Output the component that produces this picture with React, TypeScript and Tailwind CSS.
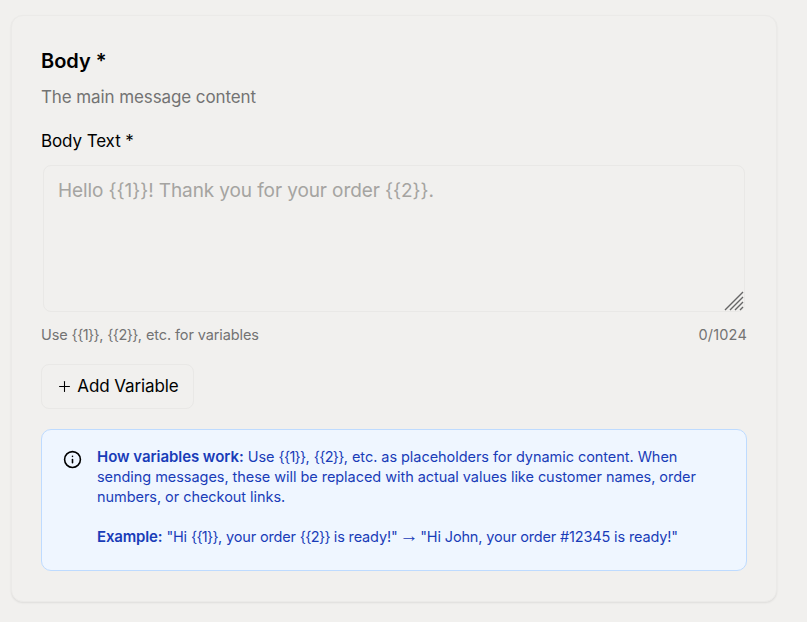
import { Info, Plus } from "lucide-react";

const Var = ({ n, space }: { n: number; space: string }) => (
  <span className={space}>{`{{${n}}}`}</span>
);

export default function App() {
  return (
    <div className="min-h-[622px] bg-[#f1f0ee] px-[11px] pt-[15px] font-['Inter',sans-serif] text-black">
      <div className="w-[766px] h-[587px] rounded-xl border border-[#ebeae8] bg-[#f1f0ee] px-[29px] pt-[29px] shadow-[0_1px_2px_rgba(0,0,0,0.08)]">
        <h2 className="text-[20px] leading-[32px] font-semibold">Body *</h2>
        <p className="mt-[8px] text-[17px] leading-[24px] text-[#737373] tracking-[-0.1px]">The main message content</p>

        <label className="block mt-[20px] text-[17px] leading-[24px] tracking-[-0.1px]">Body Text *</label>
        <div className="relative mt-[12px] px-[2px]">
          <textarea
            placeholder="Hello {{1}}! Thank you for your order {{2}}."
            className="block w-full h-[147px] resize-none rounded-lg border border-[#e9e8e6] bg-transparent px-[14px] py-[11px] text-[19px] leading-[27px] tracking-[-0.1px] outline-none placeholder:text-[#a5a4a1]"
          />
          <svg width="20" height="20" viewBox="0 0 20 20" className="pointer-events-none absolute bottom-px right-[3px] text-[#666]" stroke="currentColor" strokeWidth="1.4">
            <path d="M1 19 19 1M6 19 19 6M11 19 19 11M16 19 19 16" />
          </svg>
        </div>
        <div className="mt-[13px] flex justify-between text-[14.5px] leading-[20px] text-[#737373] tracking-[-0.1px]">
          <span>Use <Var n={1} space="tracking-[-0.6px]" />, <Var n={2} space="tracking-[-0.6px]" />, etc. for variables</span>
          <span className="tracking-[0.2px]">0/1024</span>
        </div>

        <button className="mt-[19px] flex h-[45px] w-[153px] items-center justify-center gap-[4px] rounded-lg border border-[#e9e8e6] text-[17px] tracking-[-0.1px]">
          <Plus size={17} strokeWidth={1.5} />
          Add Variable
        </button>

        <div className="mt-[20px] flex h-[142px] gap-[15px] rounded-[10px] border border-[#bedbff] bg-[#eff6ff] pl-[21px] pr-[24px] pt-[17px] text-[14.5px] leading-[20px] text-[#193cb8] tracking-[-0.05px]">
          <Info size={19} strokeWidth={2} className="mt-[3px] shrink-0 text-black" />
          <div>
            <p><strong className="font-semibold text-[15px]">How variables work:</strong> Use <Var n={1} space="tracking-[-0.7px]" />, <Var n={2} space="tracking-[-0.7px]" />, etc. as placeholders for dynamic content. When sending messages, these will be replaced with actual values like customer names, order numbers, or checkout links.</p>
            <p className="mt-[19px] tracking-[-0.15px]"><strong className="font-semibold text-[15px]">Example:</strong> "Hi <Var n={1} space="tracking-[-0.7px]" />, your order <Var n={2} space="tracking-[-0.7px]" /> is ready!" <span className="mx-[-2px] font-['Liberation_Sans',sans-serif] text-[19px] leading-none">→</span> "Hi John, your order #12345 is ready!"</p>
          </div>
        </div>
      </div>
    </div>
  );
}
